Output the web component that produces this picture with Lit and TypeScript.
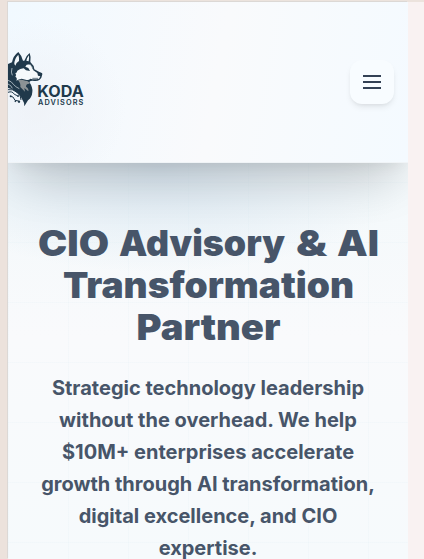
import { LitElement, html, css, svg } from "lit";
import { customElement } from "lit/decorators.js";

@customElement("koda-logo")
class KodaLogo extends LitElement {
  static styles = css`
    :host { display: block; width: 77px; height: 60px; }
    svg { display: block; }
    .ink { fill: #20394b; }
    .line { fill: none; stroke: #20394b; }
    .name { font: 700 47px Inter, "Liberation Sans", sans-serif; fill: #20394b; }
    .sub { font: 600 22px Inter, "Liberation Sans", sans-serif; fill: #20394b; }
  `;
  render() {
    return html`<svg width="77" height="60" viewBox="24 30 231 180" role="img" aria-label="Koda Advisors">
      <path class="ink" d="M24 72 L36 67 Q39 48 55 36 Q64 45 69 62 L73 62 Q77 48 89 39 Q94 52 91 66 L101 78 L103 88 L118 96 Q128 98 127 103 L124 113 L119 119 Q111 125 98 122 Q91 122 88 126 Q99 143 97 156 Q96 172 84 181 L73 199 Q73 187 68 181 Q60 163 45 154 Q33 145 24 144Z"/>
      <path fill="#f2f7fa" d="M43 72 Q43 56 55 44 Q58 53 57 63 Q48 68 46 77Z M79 62 Q81 53 87 46 Q88 55 86 64Z"/>
      <path fill="#f5f9fb" d="M52 92 Q60 86 71 85 L78 91 L90 93 L85 84 L76 80 L80 74 L91 73 L98 82 L100 91 L112 99 L114 107 L121 109 L117 116 Q103 120 91 116 Q87 121 80 120 L65 116 Q56 117 49 122 Q53 113 46 110 Q51 105 46 100 Q51 99 52 92Z"/>
      <path class="line" stroke-width="2" d="M87 71 L95 77 L99 88 M97 115 L114 115"/>
      <path fill="#8b9295" d="M54 120 Q64 117 76 122 Q88 123 89 131 Q78 130 78 140 Q87 145 85 154 L73 144 L75 155 L61 141 Q63 130 54 120Z"/>
      <path fill="none" stroke="#dfe8ed" stroke-width="2" d="M24 121 Q35 124 41 134 Q47 141 58 146 M24 132 Q34 136 37 145 M36 84 Q32 98 37 106"/>
      <path class="line" stroke-width="3" d="M24 157 Q37 152 43 163 L52 167 M24 149 Q39 146 51 157 Q64 166 63 180 M31 169 L39 171 L45 181 L56 183"/>
      <circle class="ink" cx="54" cy="168" r="3"/><circle class="ink" cx="32" cy="169" r="3"/><circle class="ink" cx="57" cy="185" r="3.5"/><circle class="ink" cx="46" cy="184" r="2.5"/>
      <text class="name" x="112" y="171" textLength="139" lengthAdjust="spacingAndGlyphs">KODA</text>
      <text class="sub" x="114" y="194" textLength="136" lengthAdjust="spacing">ADVISORS</text>
    </svg>`;
  }
}

@customElement("app-root")
class AppRoot extends LitElement {
  static styles = css`
    :host { display: block; height: 559px; overflow: hidden; box-sizing: border-box; padding: 2px 16px 0 8px;
      background: linear-gradient(90deg, #ece2dc 8px, transparent 8px), linear-gradient(#ece3dd 2px, #f9f2f2 2px); }
    .page { height: 557px; width: 400px; overflow: hidden; box-shadow: -1px -1px 0 #dcd8d5;
      background:
        repeating-linear-gradient(90deg, rgba(205,228,236,.1) 0 1px, transparent 1px 60px),
        repeating-linear-gradient(rgba(205,228,236,.1) 0 1px, transparent 1px 60px),
        radial-gradient(ellipse 260px 105px at 150px 165px, rgba(212,227,239,.8), transparent),
        linear-gradient(180deg, #f4f9fb 35%, #f9fafc 60%, #f6fafc); }
    header { height: 161px; box-sizing: border-box; display: flex; align-items: flex-start; justify-content: space-between;
      padding: 48px 14px 0 0; border-bottom: 1px solid #f0f4f7;
      background: radial-gradient(circle at 28px 106px, rgba(238,240,245,.7), transparent 90px), linear-gradient(100deg, #f1f9ff, #f9fafc 52%, #f4faff);
      box-shadow: 0 25px 50px -12px rgba(0,0,0,.2), 0 8px 14px -6px rgba(0,0,0,.06); }
    button { width: 44px; height: 44px; margin-top: 10px; padding: 0; border: 0; border-radius: 12px; background: #f8fcff;
      display: flex; align-items: center; justify-content: center;
      box-shadow: 0 4px 6px -1px rgba(0,0,0,.08), 0 2px 4px -2px rgba(0,0,0,.08); }
    .bars { display: flex; flex-direction: column; gap: 4px; }
    .bar { width: 18px; height: 2px; background: #334155; }
    h1 { margin: 59px 0 0; height: 126px; }
    h1 svg { display: block; }
    .title { font: 900 35.5px Inter, "Liberation Sans", sans-serif; fill: #475569; }
    p { margin: 24px 20px 0; text-align: center; font: 700 20px/32px Inter, sans-serif; color: #475569; }
  `;
  private words = [
    ["CIO", 30, 34, 71], ["Advisory", 111, 34, 166], ["&", 288, 34, 31], ["AI", 329, 34, 42],
    ["Transformation", 55, 76, 291], ["Partner", 128.5, 118, 144],
  ];
  render() {
    return html`<div class="page">
      <header><koda-logo></koda-logo>
        <button aria-label="Open menu"><span class="bars"><span class="bar"></span><span class="bar"></span><span class="bar"></span></span></button>
      </header>
      <main>
        <h1><svg width="400" height="126">${this.words.map(([t, x, y, w]) => svg`<text class="title" x=${x} y=${y} textLength=${w} lengthAdjust="spacingAndGlyphs">${t}</text>`)}</svg></h1>
        <p>Strategic technology leadership<br>without the overhead. We help<br>$10M+ enterprises accelerate<br>growth through AI transformation,<br>digital excellence, and CIO<br>expertise.</p>
      </main>
    </div>`;
  }
}
